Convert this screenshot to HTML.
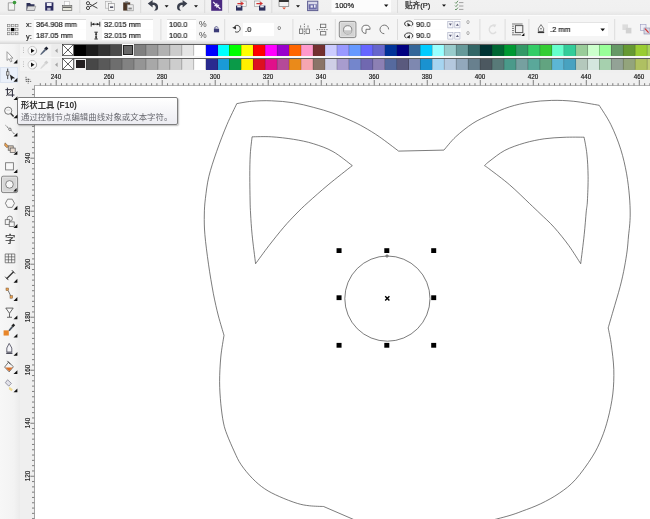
<!DOCTYPE html>
<html lang="zh"><head><meta charset="utf-8"><title>CorelDRAW</title>
<style>
*{margin:0;padding:0;box-sizing:border-box}
html,body{width:650px;height:519px;overflow:hidden;background:#fff}
body{position:relative;font-family:"Liberation Sans","Noto Sans CJK SC",sans-serif;font-size:7.4px;color:#222;line-height:1}
.abs,.sw,.t,.rl,.rv,.in,.sep,svg.ic{position:absolute}
.sw{display:block}
.sw svg{display:block}
.nx{background:#fff;border:0}
.t{white-space:nowrap;letter-spacing:0;will-change:transform;color:#1a1a1a;-webkit-text-stroke:0.2px #1a1a1a}
.in{background:#fff}
.sep{width:1px;background:#d9d9d9}
.rl{will-change:transform;width:20px;text-align:center;font-size:6.3px;color:#111;-webkit-text-stroke:0.15px #111;white-space:nowrap}
.rv{will-change:transform;width:20px;height:8px;line-height:8px;text-align:center;font-size:6.3px;color:#111;-webkit-text-stroke:0.15px #111;white-space:nowrap;transform:rotate(-90deg);transform-origin:50% 50%}
#tip{position:absolute;left:17.4px;top:96.9px;width:160.4px;height:28.4px;border:1px solid #7e7e7e;border-radius:2px;background:linear-gradient(#ffffff,#ececf2);box-shadow:1px 1px 1.5px rgba(0,0,0,.25)}
#tip b{position:absolute;left:2.9px;top:3px;font-size:8.4px;color:#333;font-weight:bold;white-space:nowrap;will-change:transform}
#tip span{position:absolute;left:2.9px;top:15.1px;font-size:8.42px;color:#68696f;white-space:nowrap;will-change:transform}
</style></head>
<body>
<div class="abs" style="left:0;top:0;width:650px;height:15px;background:linear-gradient(#f1f1f1 0,#f0f0f0 70%,#e6e6e6 100%)"></div>
<div class="abs" style="left:0;top:15px;width:650px;height:1px;background:#fbfbfb"></div>
<div class="abs" style="left:0;top:16px;width:650px;height:24px;background:#f5f5f5"></div>
<div class="abs" style="left:0;top:40px;width:650px;height:4.2px;background:linear-gradient(#f5f5f5,#e6e6e6 50%,#d6d6d6)"></div>
<div class="abs" style="left:0;top:44px;width:19.5px;height:475px;background:linear-gradient(90deg,#f7f7f7,#f3f3f3 70%,#ebebeb)"></div>
<div class="abs" style="left:19.5px;top:44px;width:630.5px;height:28.5px;background:#efefef"></div>
<div class="abs" style="left:19.5px;top:72.5px;width:630.5px;height:13.5px;background:#f0f0f0"></div>
<div class="abs" style="left:19.5px;top:86px;width:15px;height:433px;background:#efefef"></div>
<div class="abs" style="left:34.1px;top:85.4px;width:616px;height:434px;background:#fff;border-left:1px solid #a4a4a4;border-top:1px solid #b4b4b4"></div>
<svg class="ic" style="left:0;top:0" width="650" height="519" viewBox="0 0 650 519"><path d="M40.30 83.2V85.4M45.60 83.2V85.4M50.90 83.2V85.4M56.20 80V85.4M61.50 83.2V85.4M66.80 83.2V85.4M72.10 83.2V85.4M77.40 83.2V85.4M82.71 83.2V85.4M88.01 83.2V85.4M93.31 83.2V85.4M98.61 83.2V85.4M103.91 83.2V85.4M109.21 80V85.4M114.51 83.2V85.4M119.81 83.2V85.4M125.11 83.2V85.4M130.41 83.2V85.4M135.72 83.2V85.4M141.02 83.2V85.4M146.32 83.2V85.4M151.62 83.2V85.4M156.92 83.2V85.4M162.22 80V85.4M167.52 83.2V85.4M172.82 83.2V85.4M178.12 83.2V85.4M183.42 83.2V85.4M188.73 83.2V85.4M194.03 83.2V85.4M199.33 83.2V85.4M204.63 83.2V85.4M209.93 83.2V85.4M215.23 80V85.4M220.53 83.2V85.4M225.83 83.2V85.4M231.13 83.2V85.4M236.43 83.2V85.4M241.74 83.2V85.4M247.04 83.2V85.4M252.34 83.2V85.4M257.64 83.2V85.4M262.94 83.2V85.4M268.24 80V85.4M273.54 83.2V85.4M278.84 83.2V85.4M284.14 83.2V85.4M289.44 83.2V85.4M294.75 83.2V85.4M300.05 83.2V85.4M305.35 83.2V85.4M310.65 83.2V85.4M315.95 83.2V85.4M321.25 80V85.4M326.55 83.2V85.4M331.85 83.2V85.4M337.15 83.2V85.4M342.45 83.2V85.4M347.75 83.2V85.4M353.06 83.2V85.4M358.36 83.2V85.4M363.66 83.2V85.4M368.96 83.2V85.4M374.26 80V85.4M379.56 83.2V85.4M384.86 83.2V85.4M390.16 83.2V85.4M395.46 83.2V85.4M400.76 83.2V85.4M406.07 83.2V85.4M411.37 83.2V85.4M416.67 83.2V85.4M421.97 83.2V85.4M427.27 80V85.4M432.57 83.2V85.4M437.87 83.2V85.4M443.17 83.2V85.4M448.47 83.2V85.4M453.77 83.2V85.4M459.08 83.2V85.4M464.38 83.2V85.4M469.68 83.2V85.4M474.98 83.2V85.4M480.28 80V85.4M485.58 83.2V85.4M490.88 83.2V85.4M496.18 83.2V85.4M501.48 83.2V85.4M506.79 83.2V85.4M512.09 83.2V85.4M517.39 83.2V85.4M522.69 83.2V85.4M527.99 83.2V85.4M533.29 80V85.4M538.59 83.2V85.4M543.89 83.2V85.4M549.19 83.2V85.4M554.49 83.2V85.4M559.80 83.2V85.4M565.10 83.2V85.4M570.40 83.2V85.4M575.70 83.2V85.4M581.00 83.2V85.4M586.30 80V85.4M591.60 83.2V85.4M596.90 83.2V85.4M602.20 83.2V85.4M607.50 83.2V85.4M612.81 83.2V85.4M618.11 83.2V85.4M623.41 83.2V85.4M628.71 83.2V85.4M634.01 83.2V85.4M639.31 80V85.4M644.61 83.2V85.4M649.91 83.2V85.4" stroke="#4a4a4a" stroke-width="0.7" fill="none"/><path d="M32 89.29H34.2M32 94.59H34.2M32 99.89H34.2M30.4 105.19H34.2M32 110.49H34.2M32 115.79H34.2M32 121.09H34.2M32 126.39H34.2M32 131.69H34.2M32 137.00H34.2M32 142.30H34.2M32 147.60H34.2M32 152.90H34.2M30.4 158.20H34.2M32 163.50H34.2M32 168.80H34.2M32 174.10H34.2M32 179.40H34.2M32 184.70H34.2M32 190.01H34.2M32 195.31H34.2M32 200.61H34.2M32 205.91H34.2M30.4 211.21H34.2M32 216.51H34.2M32 221.81H34.2M32 227.11H34.2M32 232.41H34.2M32 237.71H34.2M32 243.02H34.2M32 248.32H34.2M32 253.62H34.2M32 258.92H34.2M30.4 264.22H34.2M32 269.52H34.2M32 274.82H34.2M32 280.12H34.2M32 285.42H34.2M32 290.73H34.2M32 296.03H34.2M32 301.33H34.2M32 306.63H34.2M32 311.93H34.2M30.4 317.23H34.2M32 322.53H34.2M32 327.83H34.2M32 333.13H34.2M32 338.43H34.2M32 343.74H34.2M32 349.04H34.2M32 354.34H34.2M32 359.64H34.2M32 364.94H34.2M30.4 370.24H34.2M32 375.54H34.2M32 380.84H34.2M32 386.14H34.2M32 391.44H34.2M32 396.75H34.2M32 402.05H34.2M32 407.35H34.2M32 412.65H34.2M32 417.95H34.2M30.4 423.25H34.2M32 428.55H34.2M32 433.85H34.2M32 439.15H34.2M32 444.45H34.2M32 449.75H34.2M32 455.06H34.2M32 460.36H34.2M32 465.66H34.2M32 470.96H34.2M30.4 476.26H34.2M32 481.56H34.2M32 486.86H34.2M32 492.16H34.2M32 497.46H34.2M32 502.76H34.2M32 508.07H34.2M32 513.37H34.2M32 518.67H34.2" stroke="#4a4a4a" stroke-width="0.7" fill="none"/></svg>
<span class="rl" style="left:46.20px;top:74px">240</span><span class="rl" style="left:99.21px;top:74px">260</span><span class="rl" style="left:152.22px;top:74px">280</span><span class="rl" style="left:205.23px;top:74px">300</span><span class="rl" style="left:258.24px;top:74px">320</span><span class="rl" style="left:311.25px;top:74px">340</span><span class="rl" style="left:364.26px;top:74px">360</span><span class="rl" style="left:417.27px;top:74px">380</span><span class="rl" style="left:470.28px;top:74px">400</span><span class="rl" style="left:523.29px;top:74px">420</span><span class="rl" style="left:576.30px;top:74px">440</span><span class="rl" style="left:629.31px;top:74px">460</span>
<span class="rv" style="left:17.6px;top:101.19px">260</span><span class="rv" style="left:17.6px;top:154.20px">240</span><span class="rv" style="left:17.6px;top:207.21px">220</span><span class="rv" style="left:17.6px;top:260.22px">200</span><span class="rv" style="left:17.6px;top:313.23px">180</span><span class="rv" style="left:17.6px;top:366.24px">160</span><span class="rv" style="left:17.6px;top:419.25px">140</span><span class="rv" style="left:17.6px;top:472.26px">120</span>
<div class="abs" style="left:19.5px;top:56.2px;width:631px;height:2.1px;background:#f7f7f7"></div><div class="abs" style="left:62px;top:44.2px;width:588px;height:12px;background:#5e5e5e"></div><div class="abs" style="left:62px;top:58.3px;width:588px;height:12px;background:#5e5e5e"></div><div class="sw nx" style="left:62.40px;top:44.2px;width:11.93px;height:12.0px"><svg width="11.93" height="12.0" viewBox="0 0 11.93 12.0"><path d="M0.4 0.4L11.53 11.6M11.53 0.4L0.4 11.6" stroke="#222" stroke-width="0.75" fill="none"/><rect x="0.35" y="0.35" width="11.23" height="11.30" fill="none" stroke="#333" stroke-width="0.7"/></svg></div><div class="sw" style="left:74.33px;top:44.8px;width:12.24px;height:10.8px;background:#000000"></div><div class="sw" style="left:86.27px;top:44.8px;width:12.23px;height:10.8px;background:#1c1c1c"></div><div class="sw" style="left:98.20px;top:44.8px;width:12.24px;height:10.8px;background:#333333"></div><div class="sw" style="left:110.14px;top:44.8px;width:12.24px;height:10.8px;background:#4b4b4b"></div><div class="sw" style="left:122.08px;top:44.2px;width:11.93px;height:12.0px;background:#fff"><i style="position:absolute;left:1.2px;top:1.2px;right:1.2px;bottom:1.2px;background:#666666;border:1px solid #222;box-sizing:border-box"></i></div><div class="sw" style="left:134.01px;top:44.8px;width:12.23px;height:10.8px;background:#808080"></div><div class="sw" style="left:145.94px;top:44.8px;width:12.24px;height:10.8px;background:#999999"></div><div class="sw" style="left:157.88px;top:44.8px;width:12.23px;height:10.8px;background:#b2b2b2"></div><div class="sw" style="left:169.81px;top:44.8px;width:12.24px;height:10.8px;background:#cccccc"></div><div class="sw" style="left:181.75px;top:44.8px;width:12.24px;height:10.8px;background:#e5e5e5"></div><div class="sw" style="left:193.69px;top:44.8px;width:12.23px;height:10.8px;background:#ffffff"></div><div class="sw" style="left:205.62px;top:44.8px;width:12.24px;height:10.8px;background:#0000ff"></div><div class="sw" style="left:217.56px;top:44.8px;width:12.23px;height:10.8px;background:#00ffff"></div><div class="sw" style="left:229.49px;top:44.8px;width:12.24px;height:10.8px;background:#00ff00"></div><div class="sw" style="left:241.43px;top:44.8px;width:12.23px;height:10.8px;background:#ffff00"></div><div class="sw" style="left:253.36px;top:44.8px;width:12.24px;height:10.8px;background:#ff0000"></div><div class="sw" style="left:265.30px;top:44.8px;width:12.23px;height:10.8px;background:#ff00ff"></div><div class="sw" style="left:277.23px;top:44.8px;width:12.24px;height:10.8px;background:#9a00cc"></div><div class="sw" style="left:289.17px;top:44.8px;width:12.23px;height:10.8px;background:#ff6600"></div><div class="sw" style="left:301.10px;top:44.8px;width:12.24px;height:10.8px;background:#ff99cc"></div><div class="sw" style="left:313.04px;top:44.8px;width:12.23px;height:10.8px;background:#733030"></div><div class="sw" style="left:324.97px;top:44.8px;width:12.23px;height:10.8px;background:#ccccff"></div><div class="sw" style="left:336.90px;top:44.8px;width:12.24px;height:10.8px;background:#9999ff"></div><div class="sw" style="left:348.84px;top:44.8px;width:12.23px;height:10.8px;background:#6699ff"></div><div class="sw" style="left:360.77px;top:44.8px;width:12.24px;height:10.8px;background:#6666ff"></div><div class="sw" style="left:372.71px;top:44.8px;width:12.23px;height:10.8px;background:#6666cc"></div><div class="sw" style="left:384.64px;top:44.8px;width:12.24px;height:10.8px;background:#003399"></div><div class="sw" style="left:396.58px;top:44.8px;width:12.23px;height:10.8px;background:#000080"></div><div class="sw" style="left:408.51px;top:44.8px;width:12.24px;height:10.8px;background:#336699"></div><div class="sw" style="left:420.45px;top:44.8px;width:12.23px;height:10.8px;background:#00ccff"></div><div class="sw" style="left:432.38px;top:44.8px;width:12.24px;height:10.8px;background:#99ffff"></div><div class="sw" style="left:444.32px;top:44.8px;width:12.23px;height:10.8px;background:#99cccc"></div><div class="sw" style="left:456.25px;top:44.8px;width:12.24px;height:10.8px;background:#669999"></div><div class="sw" style="left:468.19px;top:44.8px;width:12.23px;height:10.8px;background:#336666"></div><div class="sw" style="left:480.12px;top:44.8px;width:12.24px;height:10.8px;background:#003333"></div><div class="sw" style="left:492.06px;top:44.8px;width:12.24px;height:10.8px;background:#006633"></div><div class="sw" style="left:504.00px;top:44.8px;width:12.23px;height:10.8px;background:#009933"></div><div class="sw" style="left:515.93px;top:44.8px;width:12.24px;height:10.8px;background:#339966"></div><div class="sw" style="left:527.87px;top:44.8px;width:12.23px;height:10.8px;background:#33cc66"></div><div class="sw" style="left:539.80px;top:44.8px;width:12.24px;height:10.8px;background:#33cc33"></div><div class="sw" style="left:551.74px;top:44.8px;width:12.23px;height:10.8px;background:#66ffcc"></div><div class="sw" style="left:563.67px;top:44.8px;width:12.24px;height:10.8px;background:#33cc99"></div><div class="sw" style="left:575.61px;top:44.8px;width:12.23px;height:10.8px;background:#99cc99"></div><div class="sw" style="left:587.54px;top:44.8px;width:12.24px;height:10.8px;background:#ccffcc"></div><div class="sw" style="left:599.48px;top:44.8px;width:12.23px;height:10.8px;background:#99ff99"></div><div class="sw" style="left:611.41px;top:44.8px;width:12.24px;height:10.8px;background:#669966"></div><div class="sw" style="left:623.35px;top:44.8px;width:12.23px;height:10.8px;background:#669933"></div><div class="sw" style="left:635.28px;top:44.8px;width:12.24px;height:10.8px;background:#99cc33"></div><div class="sw" style="left:647.22px;top:44.8px;width:12.23px;height:10.8px;background:#a8d45a"></div>
<div class="sw nx" style="left:62.40px;top:58.3px;width:11.93px;height:12.0px"><svg width="11.93" height="12.0" viewBox="0 0 11.93 12.0"><path d="M0.4 0.4L11.53 11.6M11.53 0.4L0.4 11.6" stroke="#222" stroke-width="0.75" fill="none"/><rect x="0.35" y="0.35" width="11.23" height="11.30" fill="none" stroke="#333" stroke-width="0.7"/></svg></div><div class="sw" style="left:74.33px;top:58.9px;width:11.94px;height:10.8px;background:#f4f4f4"><i style="position:absolute;left:1.5px;top:1.5px;right:1.2px;bottom:1.5px;background:#231f20"></i></div><div class="sw" style="left:86.27px;top:58.9px;width:12.23px;height:10.8px;background:#474747"></div><div class="sw" style="left:98.20px;top:58.9px;width:12.24px;height:10.8px;background:#595959"></div><div class="sw" style="left:110.14px;top:58.9px;width:12.24px;height:10.8px;background:#6e6e6e"></div><div class="sw" style="left:122.08px;top:58.9px;width:12.23px;height:10.8px;background:#828282"></div><div class="sw" style="left:134.01px;top:58.9px;width:12.23px;height:10.8px;background:#959595"></div><div class="sw" style="left:145.94px;top:58.9px;width:12.24px;height:10.8px;background:#a8a8a8"></div><div class="sw" style="left:157.88px;top:58.9px;width:12.23px;height:10.8px;background:#bbbbbb"></div><div class="sw" style="left:169.81px;top:58.9px;width:12.24px;height:10.8px;background:#cdcdcd"></div><div class="sw" style="left:181.75px;top:58.9px;width:12.24px;height:10.8px;background:#e2e2e2"></div><div class="sw" style="left:193.69px;top:58.9px;width:12.23px;height:10.8px;background:#ffffff"></div><div class="sw" style="left:205.62px;top:58.9px;width:12.24px;height:10.8px;background:#2a2b8f"></div><div class="sw" style="left:217.56px;top:58.9px;width:12.23px;height:10.8px;background:#1a9ad6"></div><div class="sw" style="left:229.49px;top:58.9px;width:12.24px;height:10.8px;background:#0a9a48"></div><div class="sw" style="left:241.43px;top:58.9px;width:12.23px;height:10.8px;background:#fff000"></div><div class="sw" style="left:253.36px;top:58.9px;width:12.24px;height:10.8px;background:#dd1020"></div><div class="sw" style="left:265.30px;top:58.9px;width:12.23px;height:10.8px;background:#e0108a"></div><div class="sw" style="left:277.23px;top:58.9px;width:12.24px;height:10.8px;background:#b54a98"></div><div class="sw" style="left:289.17px;top:58.9px;width:12.23px;height:10.8px;background:#ea8a1a"></div><div class="sw" style="left:301.10px;top:58.9px;width:12.24px;height:10.8px;background:#f6a6b0"></div><div class="sw" style="left:313.04px;top:58.9px;width:12.23px;height:10.8px;background:#8a7468"></div><div class="sw" style="left:324.97px;top:58.9px;width:12.23px;height:10.8px;background:#cfcfe6"></div><div class="sw" style="left:336.90px;top:58.9px;width:12.24px;height:10.8px;background:#a89cce"></div><div class="sw" style="left:348.84px;top:58.9px;width:12.23px;height:10.8px;background:#7486cc"></div><div class="sw" style="left:360.77px;top:58.9px;width:12.24px;height:10.8px;background:#7068b0"></div><div class="sw" style="left:372.71px;top:58.9px;width:12.23px;height:10.8px;background:#8c80b4"></div><div class="sw" style="left:384.64px;top:58.9px;width:12.24px;height:10.8px;background:#566a9e"></div><div class="sw" style="left:396.58px;top:58.9px;width:12.23px;height:10.8px;background:#5a5a7e"></div><div class="sw" style="left:408.51px;top:58.9px;width:12.24px;height:10.8px;background:#7e88b0"></div><div class="sw" style="left:420.45px;top:58.9px;width:12.23px;height:10.8px;background:#1a92d0"></div><div class="sw" style="left:432.38px;top:58.9px;width:12.24px;height:10.8px;background:#a6d4f0"></div><div class="sw" style="left:444.32px;top:58.9px;width:12.23px;height:10.8px;background:#b4c8de"></div><div class="sw" style="left:456.25px;top:58.9px;width:12.24px;height:10.8px;background:#92a8bc"></div><div class="sw" style="left:468.19px;top:58.9px;width:12.23px;height:10.8px;background:#68808e"></div><div class="sw" style="left:480.12px;top:58.9px;width:12.24px;height:10.8px;background:#4c5860"></div><div class="sw" style="left:492.06px;top:58.9px;width:12.24px;height:10.8px;background:#587a78"></div><div class="sw" style="left:504.00px;top:58.9px;width:12.23px;height:10.8px;background:#4a9a8a"></div><div class="sw" style="left:515.93px;top:58.9px;width:12.24px;height:10.8px;background:#76a0a0"></div><div class="sw" style="left:527.87px;top:58.9px;width:12.23px;height:10.8px;background:#5aa89a"></div><div class="sw" style="left:539.80px;top:58.9px;width:12.24px;height:10.8px;background:#62a480"></div><div class="sw" style="left:551.74px;top:58.9px;width:12.23px;height:10.8px;background:#5cb6d4"></div><div class="sw" style="left:563.67px;top:58.9px;width:12.24px;height:10.8px;background:#48a2c0"></div><div class="sw" style="left:575.61px;top:58.9px;width:12.23px;height:10.8px;background:#b4c8bc"></div><div class="sw" style="left:587.54px;top:58.9px;width:12.24px;height:10.8px;background:#d4e6de"></div><div class="sw" style="left:599.48px;top:58.9px;width:12.23px;height:10.8px;background:#a6d0ae"></div><div class="sw" style="left:611.41px;top:58.9px;width:12.24px;height:10.8px;background:#93a296"></div><div class="sw" style="left:623.35px;top:58.9px;width:12.23px;height:10.8px;background:#93a47c"></div><div class="sw" style="left:635.28px;top:58.9px;width:12.24px;height:10.8px;background:#afc062"></div><div class="sw" style="left:647.22px;top:58.9px;width:12.23px;height:10.8px;background:#c0cc78"></div>
<svg class="ic" style="left:0;top:0" width="650" height="80" viewBox="0 0 650 80"><path d="M74.33 44.8V55.6M74.33 58.9V69.7M86.27 44.8V55.6M86.27 58.9V69.7M98.20 44.8V55.6M98.20 58.9V69.7M110.14 44.8V55.6M110.14 58.9V69.7M122.08 44.8V55.6M122.08 58.9V69.7M134.01 44.8V55.6M134.01 58.9V69.7M145.94 44.8V55.6M145.94 58.9V69.7M157.88 44.8V55.6M157.88 58.9V69.7M169.81 44.8V55.6M169.81 58.9V69.7M181.75 44.8V55.6M181.75 58.9V69.7M193.69 44.8V55.6M193.69 58.9V69.7M205.62 44.8V55.6M205.62 58.9V69.7M217.56 44.8V55.6M217.56 58.9V69.7M229.49 44.8V55.6M229.49 58.9V69.7M241.43 44.8V55.6M241.43 58.9V69.7M253.36 44.8V55.6M253.36 58.9V69.7M265.30 44.8V55.6M265.30 58.9V69.7M277.23 44.8V55.6M277.23 58.9V69.7M289.17 44.8V55.6M289.17 58.9V69.7M301.10 44.8V55.6M301.10 58.9V69.7M313.04 44.8V55.6M313.04 58.9V69.7M324.97 44.8V55.6M324.97 58.9V69.7M336.90 44.8V55.6M336.90 58.9V69.7M348.84 44.8V55.6M348.84 58.9V69.7M360.77 44.8V55.6M360.77 58.9V69.7M372.71 44.8V55.6M372.71 58.9V69.7M384.64 44.8V55.6M384.64 58.9V69.7M396.58 44.8V55.6M396.58 58.9V69.7M408.51 44.8V55.6M408.51 58.9V69.7M420.45 44.8V55.6M420.45 58.9V69.7M432.38 44.8V55.6M432.38 58.9V69.7M444.32 44.8V55.6M444.32 58.9V69.7M456.25 44.8V55.6M456.25 58.9V69.7M468.19 44.8V55.6M468.19 58.9V69.7M480.12 44.8V55.6M480.12 58.9V69.7M492.06 44.8V55.6M492.06 58.9V69.7M504.00 44.8V55.6M504.00 58.9V69.7M515.93 44.8V55.6M515.93 58.9V69.7M527.87 44.8V55.6M527.87 58.9V69.7M539.80 44.8V55.6M539.80 58.9V69.7M551.74 44.8V55.6M551.74 58.9V69.7M563.67 44.8V55.6M563.67 58.9V69.7M575.61 44.8V55.6M575.61 58.9V69.7M587.54 44.8V55.6M587.54 58.9V69.7M599.48 44.8V55.6M599.48 58.9V69.7M611.41 44.8V55.6M611.41 58.9V69.7M623.35 44.8V55.6M623.35 58.9V69.7M635.28 44.8V55.6M635.28 58.9V69.7M647.22 44.8V55.6M647.22 58.9V69.7" stroke="rgba(30,30,30,0.4)" stroke-width="0.6" fill="none"/></svg>
<svg class="ic" style="left:20px;top:44.0px" width="42" height="14" viewBox="0 0 42 14"><rect x="0" y="0.3" width="42" height="12.6" fill="#f3f3f3"/><g fill="#bdbdbd"><rect x="3" y="3.4" width="1" height="1"/><rect x="3" y="5.7" width="1" height="1"/><rect x="3" y="8" width="1" height="1"/></g><circle cx="12.3" cy="6.7" r="4.3" fill="#f9f9f9" stroke="#c4c4c4" stroke-width="0.9"/><path d="M13.6 10.6A4.3 4.3 0 0 0 16.4 5.4" stroke="#a8a8a8" stroke-width="0.8" fill="none"/><path d="M11 4.5L14.5 6.7L11 8.9Z" fill="#111"/><path d="M26.4 2.4L28.4 4.4L26.2 6.6L24.2 4.6Z" fill="#1e2230"/><path d="M24.6 5L20.8 9.6L20.2 10.9L21.6 10.4L26 6.6Z" fill="#56647a"/><rect x="31.4" y="0.4" width="9.8" height="12.4" fill="#ececec"/><path d="M37.6 4.5L35 6.7L37.6 8.9Z" fill="#a2a2a2"/></svg><svg class="ic" style="left:20px;top:58.0px" width="42" height="14" viewBox="0 0 42 14"><rect x="0" y="0.3" width="42" height="12.6" fill="#f3f3f3"/><g fill="#bdbdbd"><rect x="3" y="3.4" width="1" height="1"/><rect x="3" y="5.7" width="1" height="1"/><rect x="3" y="8" width="1" height="1"/></g><circle cx="12.3" cy="6.7" r="4.3" fill="#f9f9f9" stroke="#c4c4c4" stroke-width="0.9"/><path d="M13.6 10.6A4.3 4.3 0 0 0 16.4 5.4" stroke="#a8a8a8" stroke-width="0.8" fill="none"/><path d="M11 4.5L14.5 6.7L11 8.9Z" fill="#111"/><path d="M26.4 2.4L28.4 4.4L26.2 6.6L24.2 4.6Z" fill="#cfcfcf"/><path d="M24.6 5L20.8 9.6L20.2 10.9L21.6 10.4L26 6.6Z" fill="#d8d8d8"/><rect x="31.4" y="0.4" width="9.8" height="12.4" fill="#ececec"/><path d="M37.6 4.5L35 6.7L37.6 8.9Z" fill="#a2a2a2"/></svg>
<svg class="ic" style="left:0;top:0" width="650" height="519" viewBox="0 0 650 519" fill="none" stroke="#444" stroke-width="0.7"><path d="M365 524.4L323.6 506.5C321.3 506.4 314.1 506.3 309.7 505.8C305.3 505.3 302.3 504.9 297.3 503.4C292.3 501.9 284.9 499.0 279.5 496.6C274.1 494.2 269.2 491.9 264.7 488.8C260.2 485.8 256.2 482.3 252.3 478.3C248.4 474.3 244.2 469.2 241.2 464.8C238.2 460.4 236.8 457.0 234.5 452.0C232.2 447.0 228.9 439.6 227.1 434.8C225.3 430.0 224.6 428.2 223.5 423.0C222.4 417.8 221.5 410.7 220.8 403.8C220.2 396.9 219.6 389.4 219.6 381.6C219.6 373.8 220.1 364.7 220.8 357.0C221.5 349.3 223.5 338.9 224.0 335.3C223.1 332.1 220.2 322.9 218.4 316.0C216.6 309.1 215.1 302.4 213.4 293.8C211.8 285.2 209.9 274.1 208.5 264.2C207.1 254.3 205.6 242.9 204.9 234.7C204.2 226.5 204.2 221.0 204.3 215.0C204.4 209.0 204.6 204.9 205.4 198.5C206.2 192.1 207.0 184.1 208.9 176.3C210.8 168.5 213.6 160.2 216.6 151.6C219.6 143.0 223.6 132.5 227.0 124.5C230.4 116.5 235.2 107.1 236.8 103.6C239.3 103.2 245.8 101.8 251.6 101.3C257.4 100.8 264.4 100.5 271.4 100.8C278.4 101.0 286.6 101.7 293.6 102.8C300.6 103.9 306.7 105.6 313.3 107.3C319.9 109.0 326.9 111.0 333.0 113.2C339.1 115.4 344.8 117.9 350.0 120.2C355.2 122.5 359.1 124.4 364.0 127.2C368.9 130.0 373.6 132.8 379.4 136.8C385.2 140.8 395.4 148.7 398.6 151.1L443.9 150.1C445.9 147.9 450.9 141.3 455.7 136.8C460.5 132.3 467.2 127.0 472.9 123.3C478.6 119.6 483.9 117.5 490.0 114.7C496.1 112.0 503.1 108.9 509.7 106.8C516.3 104.7 522.4 103.4 529.4 102.3C536.4 101.2 544.2 100.6 551.6 100.4C559.0 100.2 565.9 100.5 573.8 101.3C581.7 102.1 595.0 104.6 599.2 105.3C601.1 108.5 607.2 117.2 610.8 124.5C614.4 131.8 618.1 141.0 620.7 149.2C623.3 157.4 625.2 166.0 626.6 173.8C628.0 181.6 628.8 189.3 629.4 196.0C630.0 202.7 630.2 209.0 630.2 214.0C630.2 219.0 629.9 222.3 629.6 226.0C629.3 229.7 628.9 231.8 628.5 236.0C628.1 240.2 627.8 245.8 627.1 251.0C626.4 256.2 625.6 261.1 624.5 267.0C623.4 272.9 622.1 279.1 620.2 286.4C618.3 293.7 615.1 304.1 613.1 311.0C611.1 317.9 609.0 325.1 608.2 327.9C608.7 330.7 610.4 337.8 611.3 344.7C612.2 351.6 613.5 361.1 613.8 369.3C614.0 377.5 613.8 385.8 612.8 394.0C611.8 402.2 609.9 411.3 608.0 418.6C606.1 425.9 604.3 431.6 601.7 438.0C599.1 444.4 596.6 449.9 592.2 456.9C587.8 463.8 580.9 473.6 575.4 479.7C569.9 485.8 565.1 489.2 559.3 493.2C553.5 497.2 547.0 500.7 540.8 503.7C534.6 506.7 527.4 509.2 522.3 511.1C517.2 513.1 514.3 514.1 510.0 515.4C505.7 516.7 502.4 517.5 496.6 519.0C490.8 520.5 478.6 523.7 475.0 524.6"/><path d="M252.1 136.8C255.3 136.8 264.5 136.4 271.4 136.8C278.3 137.2 286.6 138.2 293.6 139.3C300.6 140.5 306.7 141.6 313.3 143.7C319.9 145.8 326.5 147.9 333.0 151.6C339.5 155.2 349.1 163.3 352.3 165.6C348.3 168.8 335.4 178.8 328.1 184.9C320.8 191.0 313.7 197.3 308.3 202.2C302.9 207.0 300.1 209.8 296.0 214.0C291.9 218.2 288.2 222.0 283.7 227.3C279.2 232.6 273.6 239.6 268.9 245.7C264.2 251.8 257.8 260.7 255.6 263.7C255.0 258.9 252.9 243.0 252.1 234.7C251.3 226.4 250.9 219.6 250.6 214.0C250.3 208.4 250.2 207.3 250.1 201.0C250.0 194.7 249.8 184.1 249.8 176.3C249.8 168.5 249.9 160.7 250.3 154.1C250.7 147.5 251.8 139.7 252.1 136.8Z"/><path d="M484.5 165.6C485.4 164.8 486.6 163.3 490.0 160.8C493.4 158.3 499.1 153.4 504.8 150.4C510.6 147.4 517.9 144.9 524.5 143.0C531.1 141.1 537.6 139.8 544.2 138.8C550.8 137.9 557.4 137.6 564.0 137.3C570.6 137.0 580.8 137.2 584.1 137.2C584.6 140.0 586.2 147.6 586.9 154.1C587.6 160.6 588.0 168.5 588.1 176.3C588.2 184.1 587.7 195.1 587.4 201.0C587.1 206.9 586.7 206.4 586.2 212.0C585.7 217.6 585.1 226.1 584.2 234.7C583.3 243.3 581.3 258.9 580.7 263.7C578.7 260.7 573.3 251.8 568.9 245.7C564.5 239.6 558.9 232.7 554.1 227.3C549.3 221.9 544.1 217.5 540.0 213.5C535.9 209.5 534.4 208.2 529.4 203.4C524.4 198.6 516.3 190.6 509.7 184.9C503.1 179.2 494.2 172.7 490.0 169.5C485.8 166.3 485.4 166.2 484.5 165.6Z"/><circle cx="387.4" cy="298.6" r="42.6"/><circle cx="387" cy="256" r="1.3" fill="#888" stroke="#666" stroke-width="0.5"/><g fill="#000" stroke="none"><rect x="336.55" y="248.20" width="5" height="4.8"/><rect x="336.55" y="295.30" width="5" height="4.8"/><rect x="336.55" y="342.90" width="5" height="4.8"/><rect x="384.30" y="248.20" width="5" height="4.8"/><rect x="384.30" y="342.90" width="5" height="4.8"/><rect x="431.20" y="248.20" width="5" height="4.8"/><rect x="431.20" y="295.30" width="5" height="4.8"/><rect x="431.20" y="342.90" width="5" height="4.8"/></g><path d="M385.2 296.3L389.4 300.5M389.4 296.3L385.2 300.5" stroke="#000" stroke-width="1.4"/></svg>
<div id="tip"><b id="tb1">形状工具 (F10)</b><span id="tb2">通过控制节点编辑曲线对象或文本字符。</span></div>
<div class="abs" style="left:0;top:66.8px;width:18px;height:16.6px;background:#eaf0fa;border:0.6px solid #dbe3f0"></div><svg class="ic" style="left:0;top:44px" width="20" height="360" viewBox="0 44 20 360"><g transform="translate(0 63.50)"><path d="M17.4 -3.9V0H13.5Z" fill="#111"/><path d="M7 -11.8V-3L9 -4.8L10.6 -1.6L12 -2.3L10.5 -5.4H13Z" fill="#fbfbfb" stroke="#8a8a8a" stroke-width="0.8"/></g><g transform="translate(0 81.77)"><path d="M17.4 -3.9V0H13.5Z" fill="#111"/><path d="M7.7 -13.2V-2.7" stroke="#333" stroke-width="0.9"/><rect x="6.4" y="-10" width="2.6" height="3.4" fill="#d8d8d8" stroke="#444" stroke-width="0.6"/><path d="M9.9 -7.2L15.2 -3.6L12.4 -3.2L11.2 -0.9Z" fill="#222"/></g><g transform="translate(0 100.04)"><path d="M17.4 -3.9V0H13.5Z" fill="#111"/><path d="M7.4 -12.4V-5H14.4M5.4 -10.4H12.4V-3" stroke="#2a2a3a" stroke-width="1" fill="none"/><path d="M6 -4L14 -11.8" stroke="#444" stroke-width="0.8"/></g><g transform="translate(0 118.31)"><path d="M17.4 -3.9V0H13.5Z" fill="#111"/><circle cx="8.2" cy="-7.6" r="3.6" fill="#f8f8f8" stroke="#6a6a6a" stroke-width="0.9"/><path d="M6.4 -8.2H10" stroke="#bbb" stroke-width="0.6"/><path d="M10.8 -4.8L13.6 -1.8" stroke="#333" stroke-width="1.5"/></g><g transform="translate(0 136.58)"><path d="M17.4 -3.9V0H13.5Z" fill="#111"/><path d="M5.6 -11.2L9 -8M10.8 -6.4L14.4 -2.6" stroke="#444" stroke-width="0.9" stroke-dasharray="1.2 0.8"/><circle cx="9.9" cy="-7.3" r="1.2" fill="#fff" stroke="#444" stroke-width="0.7"/></g><g transform="translate(0 154.85)"><path d="M17.4 -3.9V0H13.5Z" fill="#111"/><path d="M5 -12L8.6 -8.6L7 -7L4.6 -9.4Z" fill="#e8a050" stroke="#7a5a3a" stroke-width="0.6"/><rect x="8.2" y="-9" width="5" height="4.4" fill="#d8c8b8" stroke="#555" stroke-width="0.7"/><rect x="10.2" y="-6.8" width="5" height="4.4" fill="#eadcd0" stroke="#555" stroke-width="0.7"/></g><g transform="translate(0 173.12)"><path d="M17.4 -3.9V0H13.5Z" fill="#111"/><rect x="5.6" y="-10.4" width="7.8" height="7.2" fill="#f8f8f8" stroke="#777" stroke-width="0.9"/></g><g transform="translate(0 191.39)"><rect x="1.5" y="-15.2" width="16.1" height="16.4" rx="1.6" fill="#d6d6d6" stroke="#7c7c7c" stroke-width="0.9"/><rect x="2.6" y="-14" width="13.9" height="14" rx="1" fill="none" stroke="#e6e6e6" stroke-width="0.8"/><circle cx="9.5" cy="-7" r="3.8" fill="#f6f6f6" stroke="#777" stroke-width="0.9"/><path d="M16.6 -3.3V0H13.3Z" fill="#111"/></g><g transform="translate(0 209.66)"><path d="M17.4 -3.9V0H13.5Z" fill="#111"/><path d="M7.6 -10.5H12.2L14.5 -6.4L12.2 -2.3H7.6L5.4 -6.4Z" fill="#f8f8f8" stroke="#777" stroke-width="0.9"/></g><g transform="translate(0 227.93)"><path d="M17.4 -3.9V0H13.5Z" fill="#111"/><circle cx="9.8" cy="-9.2" r="2.6" fill="#f4f4f4" stroke="#555" stroke-width="0.7"/><rect x="5.2" y="-8.2" width="4.6" height="4.6" fill="#f4f4f4" stroke="#555" stroke-width="0.7"/><rect x="9.2" y="-6" width="5" height="4.6" fill="#f4f4f4" stroke="#555" stroke-width="0.7"/></g><g transform="translate(0 264.47)"><path d="M5.2 -10.5H14.8V-1.7H5.2ZM5.2 -7.6H14.8M5.2 -4.7H14.8M8.4 -10.5V-1.7M11.6 -10.5V-1.7" fill="#f6f6f6" stroke="#555" stroke-width="0.7"/></g><g transform="translate(0 282.74)"><path d="M17.4 -3.9V0H13.5Z" fill="#111"/><path d="M6.6 -4L13.6 -11" stroke="#333" stroke-width="1.3"/><path d="M5.2 -6L8.4 -2.6M11.8 -12.6L15 -9.2" stroke="#333" stroke-width="0.9"/></g><g transform="translate(0 301.01)"><path d="M17.4 -3.9V0H13.5Z" fill="#111"/><rect x="6" y="-13" width="2.6" height="2.6" fill="#e8a050" stroke="#7a5a3a" stroke-width="0.5"/><rect x="10" y="-5.4" width="2.6" height="2.6" fill="#e8a050" stroke="#7a5a3a" stroke-width="0.5"/><path d="M8.2 -10.4L10.6 -5.4" stroke="#555" stroke-width="0.8"/></g><g transform="translate(0 319.28)"><path d="M17.4 -3.9V0H13.5Z" fill="#111"/><path d="M5.8 -11.2H13.2L9.5 -6ZM9.5 -6V-2.2M7 -2H12" fill="#f8f8f8" stroke="#444" stroke-width="0.8"/></g><g transform="translate(0 337.55)"><path d="M17.4 -3.9V0H13.5Z" fill="#111"/><rect x="3.6" y="-7.2" width="5.2" height="5.2" fill="#e8862a"/><path d="M13.4 -14L15.2 -12.2L13 -10L11.4 -11.8Z" fill="#222"/><path d="M11.6 -11.4L8.4 -7.4L9.6 -6.4L13 -10Z" fill="#4a5460"/></g><g transform="translate(0 355.82)"><path d="M17.4 -3.9V0H13.5Z" fill="#111"/><path d="M9.2 -12.4L11.8 -7.8V-3.8H6.8V-7.8Z" fill="#f4f4f8" stroke="#445" stroke-width="0.8"/><path d="M6.2 -2.6H12.4" stroke="#334" stroke-width="1.3"/></g><g transform="translate(0 374.09)"><path d="M17.4 -3.9V0H13.5Z" fill="#111"/><path d="M8.6 -12L13.4 -7.4L9.2 -2.2L4.6 -7Z" fill="#f4f4f4" stroke="#555" stroke-width="0.8"/><path d="M5.2 -6.6H12.8L9.2 -2.8Z" fill="#d8702a"/><path d="M7.4 -13.2L10.4 -9.8" stroke="#444" stroke-width="0.9"/></g><g transform="translate(0 392.36)"><path d="M17.4 -3.9V0H13.5Z" fill="#111"/><path d="M7.6 -12.6L11.4 -9L8.8 -6.2L5.4 -9.6Z" fill="#e2e2ea" stroke="#778" stroke-width="0.7"/><path d="M9.4 -5.6L12.8 -3.2L11.6 -1.2L8.8 -3.2Z" fill="#eed890"/></g></svg><span class="t" style="left:4.8px;top:234.6px;font-size:10.4px;color:#333">字</span><svg class="ic" style="left:23px;top:75.4px" width="12" height="12" viewBox="0 0 12 12"><path d="M3 1.8V6.4H8.8M5.2 3.6V8.6M3 4.4H7.4" stroke="#505050" stroke-width="0.8" fill="none" stroke-dasharray="1.4 0.7"/></svg>
<!-- ===== top toolbar ===== -->
<svg class="ic" style="left:0;top:0" width="650" height="16" viewBox="0 0 650 16">
  <!-- new -->
  <path d="M8.3 2.8H12.8L14.6 4.6V10.4H8.3Z" fill="#f3f3f3" stroke="#8e8e8e" stroke-width="0.8"/><path d="M9 9.8H14" stroke="#c8c8c8" stroke-width="0.8"/>
  <circle cx="14.5" cy="2.6" r="1.8" fill="#3a9a3a"/>
  <!-- open -->
  <path d="M26.5 3H30L31 4.2H34.5V10.5H26.5Z" fill="#2b2f55"/>
  <path d="M27.8 6.2H35.8L34.4 10.5H26.6Z" fill="#dcdcdc" stroke="#777" stroke-width="0.5"/>
  <!-- save -->
  <rect x="45.2" y="2.4" width="8.2" height="8.2" fill="#2b2b60"/>
  <rect x="46.8" y="3" width="4.8" height="3" fill="#f0f0f8"/>
  <rect x="47.2" y="7.8" width="3.4" height="2.8" fill="#b9b9cc"/>
  <!-- print -->
  <rect x="64.6" y="1.4" width="5" height="4.4" fill="#fdfdfd" stroke="#b0b0b0" stroke-width="0.5"/>
  <rect x="62.6" y="5.6" width="9.2" height="5" fill="#e9e9de" stroke="#666" stroke-width="0.7"/>
  <rect x="63" y="6.6" width="8.4" height="1.3" fill="#555"/>
  <!-- sep -->
  <rect x="79.3" y="0" width="1" height="13" fill="#dadada"/>
  <!-- scissors -->
  <g fill="none" stroke="#444" stroke-width="1">
    <circle cx="88" cy="3.2" r="1.6"/><circle cx="88" cy="8" r="1.6"/>
    <path d="M89.4 4L97.4 8.2M89.4 7.2L97.2 2.4"/>
  </g>
  <!-- copy -->
  <rect x="105.6" y="1.6" width="5.6" height="6.6" fill="#f2f2f2" stroke="#aaa" stroke-width="0.6"/>
  <rect x="108.6" y="3.6" width="6" height="7" fill="#f7f7f7" stroke="#888" stroke-width="0.6"/>
  <rect x="110" y="6.4" width="3.2" height="1.6" fill="#556"/>
  <!-- paste -->
  <rect x="123.2" y="2.4" width="7" height="8.2" fill="#4a3424"/>
  <rect x="125.2" y="1.4" width="3" height="1.8" fill="#777"/>
  <rect x="127.2" y="4.8" width="6" height="6" fill="#ededed" stroke="#888" stroke-width="0.6"/>
  <rect x="128.4" y="7.6" width="3.4" height="1.8" fill="#888"/>
  <!-- sep -->
  <rect x="140.2" y="0" width="1" height="13" fill="#dadada"/>
  <!-- undo -->
  <path d="M147.8 3.6L152.6 0V2.4C157 2.4 158.6 5 158 8.4C157.6 9.8 156.6 10.6 155.2 10.6H154C155.6 9.6 156 8.2 155.6 6.8C155.2 5.4 154 5 152.6 5V7.4Z" fill="#3a3f4c"/>
  <path d="M164.6 5.2H168.6L166.6 7.4Z" fill="#111"/>
  <!-- redo -->
  <path d="M187.4 3.6L182.6 0V2.4C178.2 2.4 176.6 5 177.2 8.4C177.6 9.8 178.6 10.6 180 10.6H181.2C179.6 9.6 179.2 8.2 179.6 6.8C180 5.4 181.2 5 182.6 5V7.4Z" fill="#3a3f4c"/>
  <path d="M194 5.2H198L196 7.4Z" fill="#111"/>
  <!-- sep -->
  <rect x="204.2" y="0" width="1" height="13" fill="#dadada"/>
  <!-- purple search/replace -->
  <rect x="211.2" y="0" width="11" height="10.8" fill="#4b2a82"/>
  <path d="M213.2 2L216.4 5.2M214.4 5.6H216.8V3.2M220.4 9L217.2 5.8M219.2 5.4H216.8V7.8" stroke="#f4f0fa" stroke-width="1.15" fill="none"/>
  <!-- sep -->
  <rect x="228" y="0" width="1" height="13" fill="#dadada"/>
  <!-- import -->
  <rect x="240.6" y="1" width="5.6" height="5.4" fill="#f4f4f4" stroke="#999" stroke-width="0.6"/>
  <rect x="236" y="5.6" width="6.4" height="5" fill="#2c2f5c"/>
  <rect x="237.2" y="5.6" width="3.6" height="1.8" fill="#e8e8f0"/>
  <path d="M237.4 3H241.2V1.6L244 3.6L241.2 5.6V4.2H237.4Z" fill="#d03030"/>
  <!-- export -->
  <rect x="254.4" y="1" width="5.6" height="5.4" fill="#f4f4f4" stroke="#999" stroke-width="0.6"/>
  <rect x="259" y="5.6" width="6.4" height="5" fill="#2c2f5c"/>
  <rect x="260.2" y="5.6" width="3.6" height="1.8" fill="#e8e8f0"/>
  <path d="M256.4 3H260.2V1.6L263 3.6L260.2 5.6V4.2H256.4Z" fill="#d03030"/>
  <!-- sep -->
  <rect x="271.3" y="0" width="1" height="13" fill="#dadada"/>
  <!-- publish -->
  <rect x="279" y="0" width="9.8" height="6.6" fill="#f2f2f2" stroke="#666" stroke-width="0.6"/>
  <rect x="279" y="0" width="9.8" height="2" fill="#333"/>
  <path d="M282.2 7.4H286L284.1 9.6Z" fill="#e05030"/>
  <path d="M296 5.2H300L298 7.4Z" fill="#111"/>
  <!-- app launcher icon -->
  <rect x="307.6" y="1.2" width="10.2" height="9.4" fill="#d9d9ea" stroke="#5c5c90" stroke-width="1"/>
  <rect x="308.6" y="4.2" width="8.2" height="5.4" fill="#6c6ca8"/>
  <rect x="310.6" y="5.4" width="2.2" height="2.2" fill="#e8e8f2"/><rect x="314" y="4.6" width="1.6" height="3" fill="#e8e8f2"/>
  <!-- zoom combo -->
  <rect x="331.5" y="0" width="59.5" height="12.4" fill="#fcfcfc"/>
  <path d="M384 4.6H388.4L386.2 7Z" fill="#111"/>
  <!-- sep -->
  <rect x="397" y="0" width="1" height="13" fill="#dadada"/>
  <!-- snap arrow -->
  <path d="M442 4.6H446L444 6.8Z" fill="#111"/>
  <!-- options icon -->
  <path d="M459 2.6H463.4M459 6H463.4M459 9.4H463.4" stroke="#8c8c8c" stroke-width="0.8" fill="none"/>
  <path d="M455 2.4L456 3.4L458 0.8M455 5.6L456 6.6L458 4.2M455 9L456 10L458 7.6" stroke="#5a8a5a" stroke-width="0.9" fill="none"/>
</svg>
<span class="t" style="left:334.6px;top:2.3px;font-size:7.5px;color:#222">100%</span>
<span class="t" style="left:405.4px;top:1.6px;font-size:7.6px;color:#222">贴齐(P)</span>

<!-- ===== property bar ===== -->
<div class="in" style="left:34.3px;top:18.5px;width:52px;height:21.5px;border-top:1px solid #dcdcdc"></div>
<div class="abs" style="left:35px;top:29.3px;width:51px;height:0.8px;background:#fdfdfd"></div>
<div class="in" style="left:101.7px;top:18.5px;width:51.3px;height:21.5px;border-top:1px solid #dcdcdc"></div>
<div class="abs" style="left:102.5px;top:29.3px;width:50px;height:0.8px;background:#fdfdfd"></div>
<div class="in" style="left:166.6px;top:18.5px;width:29px;height:21.5px;border-top:1px solid #dcdcdc"></div>
<div class="abs" style="left:167.4px;top:29.3px;width:28px;height:0.8px;background:#fdfdfd"></div>
<div class="in" style="left:243.4px;top:22.6px;width:30.6px;height:13px"></div>
<div class="in" style="left:413.6px;top:18.5px;width:47.6px;height:21.5px;border-top:1px solid #dcdcdc"></div>
<div class="abs" style="left:414px;top:29.3px;width:47px;height:0.8px;background:#fdfdfd"></div>
<div class="in" style="left:547.6px;top:22.4px;width:60.8px;height:13.8px;border-top:1px solid #e4e4e4"></div>

<span class="t" style="left:26.2px;top:21.4px">x:</span>
<span class="t" style="left:26.2px;top:32.6px">y:</span>
<span class="t" id="tx1" style="font-size:7.7px;transform:scaleX(0.96);transform-origin:0 50%;left:36.2px;top:21.2px">364.908 mm</span>
<span class="t" id="tx2" style="font-size:7.7px;transform:scaleX(0.96);transform-origin:0 50%;left:36.2px;top:32.4px">187.05 mm</span>
<span class="t" id="tx3" style="font-size:7.7px;transform:scaleX(0.96);transform-origin:0 50%;left:103.8px;top:21.2px">32.015 mm</span>
<span class="t" id="tx4" style="font-size:7.7px;transform:scaleX(0.96);transform-origin:0 50%;left:103.8px;top:32.4px">32.015 mm</span>
<span class="t" id="tx5" style="font-size:7.7px;transform:scaleX(0.96);transform-origin:0 50%;left:169px;top:21.2px">100.0</span>
<span class="t" id="tx6" style="font-size:7.7px;transform:scaleX(0.96);transform-origin:0 50%;left:169px;top:32.4px">100.0</span>
<span class="t" style="left:198.8px;top:20px;font-size:8.6px;color:#4a4a4a;-webkit-text-stroke:0">%</span>
<span class="t" style="left:198.8px;top:31px;font-size:8.6px;color:#4a4a4a;-webkit-text-stroke:0">%</span>
<span class="t" id="tx7" style="font-size:7.7px;transform:scaleX(0.96);transform-origin:0 50%;left:245px;top:26px">.0</span>
<span class="t" style="left:277.3px;top:25.4px;font-size:11px;color:#555;-webkit-text-stroke:0">°</span>
<span class="t" id="tx8" style="font-size:7.7px;transform:scaleX(0.96);transform-origin:0 50%;left:416px;top:21.2px">90.0</span>
<span class="t" id="tx9" style="font-size:7.7px;transform:scaleX(0.96);transform-origin:0 50%;left:416px;top:32.4px">90.0</span>
<span class="t" style="left:465.9px;top:19.6px;font-size:10px;color:#8a8a8a;-webkit-text-stroke:0">°</span>
<span class="t" style="left:465.9px;top:30.9px;font-size:10px;color:#8a8a8a;-webkit-text-stroke:0">°</span>
<span class="t" id="tx10" style="font-size:7.7px;transform:scaleX(0.96);transform-origin:0 50%;left:550.4px;top:26px">.2 mm</span>

<svg class="ic" style="left:0;top:16px" width="650" height="27" viewBox="0 16 650 27">
  <!-- origin grid -->
  <g fill="#f2f2f2" stroke="#777" stroke-width="0.6">
    <rect x="7.4" y="24.4" width="2.6" height="2.4"/><rect x="11.4" y="24.4" width="2.6" height="2.4"/><rect x="15.4" y="24.4" width="2.6" height="2.4"/>
    <rect x="7.4" y="28.4" width="2.6" height="2.4"/><rect x="15.4" y="28.4" width="2.6" height="2.4"/>
    <rect x="7.4" y="32.4" width="2.6" height="2.4"/><rect x="11.4" y="32.4" width="2.6" height="2.4"/><rect x="15.4" y="32.4" width="2.6" height="2.4"/>
  </g>
  <rect x="11" y="28" width="3.4" height="3.2" fill="#000"/>
  <!-- width icon -->
  <path d="M91.2 21.8V26.6M99.8 21.8V26.6M91.2 24.2H99.8" stroke="#222" stroke-width="0.9" fill="none"/>
  <path d="M92 24.2L94.2 22.8V25.6ZM99 24.2L96.8 22.8V25.6Z" fill="#222"/>
  <!-- height icon -->
  <path d="M94.4 32.2H97.8M94.4 39H97.8M96.1 32.2V39" stroke="#222" stroke-width="0.9" fill="none"/>
  <path d="M96.1 32.8L94.9 34.8H97.3ZM96.1 38.4L94.9 36.4H97.3Z" fill="#222"/>
  <!-- seps -->
  <rect x="160.4" y="19" width="1" height="21" fill="#dcdcdc"/>
  <rect x="224.2" y="19" width="1" height="21" fill="#dcdcdc"/>
  <rect x="292.4" y="19" width="1" height="21" fill="#dcdcdc"/>
  <rect x="334.8" y="19" width="1" height="21" fill="#dcdcdc"/>
  <rect x="397" y="19" width="1" height="21" fill="#dcdcdc"/>
  <rect x="479.4" y="19" width="1" height="21" fill="#dcdcdc"/>
  <rect x="504.6" y="19" width="1" height="21" fill="#dcdcdc"/>
  <rect x="528.4" y="19" width="1" height="21" fill="#dcdcdc"/>
  <rect x="614.2" y="19" width="1" height="21" fill="#dcdcdc"/>
  <!-- lock -->
  <rect x="213.9" y="28.6" width="5.2" height="3.7" fill="#3c3c78"/>
  <path d="M214.9 28.8V27.6C214.9 26.4 217.9 26.4 217.9 27.6" stroke="#3c3c78" stroke-width="0.9" fill="none"/>
  <!-- rotate -->
  <path d="M234.6 26.4C236.6 24.4 240 25.4 240.2 28.6C240.2 31.6 237 33 235 31.6" stroke="#333" stroke-width="1" fill="none"/>
  <path d="M232.2 27.8L236 26V29.4Z" fill="#333"/>
  <!-- mirror h -->
  <g stroke="#666" stroke-width="0.8" fill="none">
    <path d="M304.4 23.6V35.2" stroke-dasharray="1.4 1"/>
    <rect x="299.4" y="29" width="3.4" height="4.6"/><rect x="306" y="29" width="3.4" height="4.6"/>
    <path d="M300.6 25.4V27.6M308 25.4V27.6"/>
  </g>
  <!-- mirror v -->
  <g stroke="#666" stroke-width="0.8" fill="none">
    <path d="M316.6 29.6H328.4" stroke-dasharray="1.4 1"/>
    <rect x="320.4" y="24.2" width="5.4" height="3.4"/><rect x="320.4" y="31.6" width="5.4" height="3.4"/>
  </g>
  <!-- ellipse button (pressed) -->
  <rect x="339.3" y="21.4" width="16.6" height="16.2" rx="1.6" fill="#d4d4d4" stroke="#7c7c7c" stroke-width="0.9"/>
  <rect x="340.4" y="22.6" width="14.4" height="13.8" rx="1" fill="none" stroke="#e4e4e4" stroke-width="0.8"/>
  <circle cx="347.7" cy="29.8" r="4.1" fill="#f6f6f6" stroke="#777" stroke-width="0.9"/>
  <path d="M343.8 30.2A3.9 3.9 0 0 0 351.6 30.2Z" fill="#c8c8c8"/>
  <!-- pie -->
  <path d="M366 29.3H370.1A4.1 4.1 0 1 0 366 33.4Z" fill="#fbfbfb" stroke="#6e6e6e" stroke-width="0.95"/>
  <!-- arc -->
  <path d="M388.6 29.4A4.3 4.3 0 1 0 384.3 33.7" fill="none" stroke="#6e6e6e" stroke-width="0.95"/>
  <!-- angle icons -->
  <g fill="none" stroke="#3a3a3a" stroke-width="1">
    <path d="M406.4 26C403.4 25 404.2 21 408.6 20.9C413 20.8 414 24.6 411.4 26"/>
    <path d="M406.4 38C403.4 37 404.2 33 408.6 32.9C413 32.8 414 36.6 411.4 38"/>
  </g>
  <path d="M407.4 22.8L411 25.6L407.6 26.4Z" fill="#2a2a2a"/>
  <path d="M410 34.8L406.4 37.6L409.8 38.4Z" fill="#2a2a2a"/>
  <!-- spinners -->
  <g fill="#f6f7fb" stroke="#a4a8c0" stroke-width="0.6">
    <rect x="447.8" y="21.3" width="5.2" height="6.6"/><rect x="454.8" y="21.3" width="5.2" height="6.6"/>
    <rect x="447.8" y="32.5" width="5.2" height="6.6"/><rect x="454.8" y="32.5" width="5.2" height="6.6"/>
  </g>
  <path d="M448.9 23.6H451.9L450.4 25.8ZM455.9 25.8H458.9L457.4 23.6ZM448.9 34.8H451.9L450.4 37ZM455.9 37H458.9L457.4 34.8Z" fill="#5a5a78"/>
  <!-- disabled direction icon -->
  <path d="M495.2 26.4A3.6 4 0 1 0 496 31.6" fill="none" stroke="#dedede" stroke-width="1.5"/>
  <path d="M492.4 24.2L496.4 24.6L494.6 27.6Z" fill="#dedede"/>
  <!-- wrap icon -->
  <rect x="515.4" y="25.6" width="7.4" height="7" fill="#f2f2f2" stroke="#555" stroke-width="1"/>
  <path d="M512 24H522.6M512 26.2H514M512 28.4H514M512 30.6H514M512 32.8H514M512 34.8H521" stroke="#555" stroke-width="0.8"/>
  <path d="M524.4 33V36H521.4Z" fill="#111"/>
  <!-- pen nib -->
  <path d="M541 24.6L543.6 28.4V31.4H538.4V28.4Z" fill="#f4f4f4" stroke="#555" stroke-width="0.8"/>
  <path d="M537.8 32.4H544.2" stroke="#333" stroke-width="1.4"/>
  <circle cx="541" cy="28.8" r="0.7" fill="#444"/>
  <!-- combo arrow -->
  <path d="M600.4 28.6H605L602.7 31.2Z" fill="#111"/>
  <!-- disabled icons right -->
  <rect x="622.4" y="24.4" width="5.6" height="5.6" fill="#dcdcdc"/><rect x="625.8" y="27.8" width="5.6" height="5.6" fill="#d2d2d2"/>
  <rect x="640.4" y="24.6" width="5.6" height="6" fill="#eeeef6" stroke="#9a9ac0" stroke-width="0.6"/>
  <rect x="644" y="28" width="6" height="6" fill="#d8d8e4" stroke="#8a8aa8" stroke-width="0.6"/>
  <path d="M645 28.6L648.6 32.6" stroke="#d03030" stroke-width="1.2"/>
</svg>

</body></html>
